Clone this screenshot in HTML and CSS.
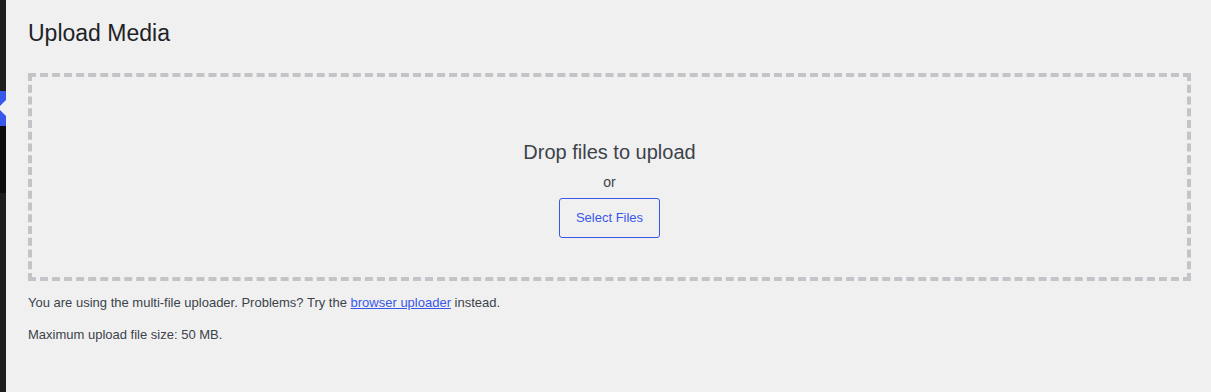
FILE: index.html
```html
<!DOCTYPE html>
<html lang="en">
<head>
<meta charset="utf-8">
<title>Upload Media</title>
<link rel="stylesheet" href="styles.css">
</head>
<body>
<div class="layout">
  <nav class="sidebar">
    <div class="menu-top"></div>
    <div class="menu-current"></div>
    <div class="submenu"></div>
    <div class="menu-rest"></div>
  </nav>
  <main class="content">
    <h1 class="page-title">Upload Media</h1>
    <div class="drop-area">
      <div class="drop-inside">
        <p class="drop-info">Drop files to upload</p>
        <p class="drop-or">or</p>
        <button class="select-btn" type="button">Select Files</button>
      </div>
    </div>
    <p class="note note-first">You are using the multi-file uploader. Problems? Try the <a href="#" class="link">browser uploader</a> instead.</p>
    <p class="note">Maximum upload file size: 50 MB.</p>
  </main>
</div>
</body>
</html>
```

FILE: styles.css
```css
* { box-sizing: border-box; }

html, body {
  margin: 0;
  padding: 0;
  height: 100%;
  background: #f0f0f1;
  font-family: "Liberation Sans", Arial, sans-serif;
  color: #3c434a;
}

.layout {
  display: flex;
  min-height: 100%;
  height: 392px;
  overflow: hidden;
}

.sidebar {
  width: 6px;
  flex: 0 0 6px;
  display: flex;
  flex-direction: column;
  overflow: hidden;
}

.menu-top { height: 91px; background: #1e1e1e; }

.menu-current {
  height: 35px;
  background: #3858e9;
  position: relative;
}

.menu-current::after {
  content: "";
  position: absolute;
  right: 0;
  top: 9px;
  width: 0;
  height: 0;
  border-top: 8px solid transparent;
  border-bottom: 8px solid transparent;
  border-right: 8px solid #f0f0f1;
}

.submenu { height: 67px; background: #0c0c0c; }

.menu-rest { flex: 1; background: #1e1e1e; }

.content {
  flex: 1;
  padding: 0 20px 0 22px;
}

.page-title {
  margin: 0;
  padding: 19px 0 4px;
  font-size: 23px;
  font-weight: 400;
  line-height: 1.3;
  color: #1d2327;
}

.drop-area {
  margin-top: 20px;
  border: 4px dashed #c3c4c7;
  height: 208px;
}

.drop-inside {
  display: flex;
  flex-direction: column;
  align-items: center;
  padding-top: 64px;
}

.drop-info {
  margin: 0;
  font-size: 20px;
  line-height: 23px;
  color: #3c434a;
}

.drop-or {
  margin: 5px 0 0;
  font-size: 14px;
  line-height: 27px;
  color: #3c434a;
}

.select-btn {
  margin-top: 2px;
  height: 40px;
  padding: 0 16px;
  font-family: "Liberation Sans", Arial, sans-serif;
  font-size: 13px;
  line-height: 38px;
  color: #3858e9;
  background: transparent;
  border: 1px solid #3858e9;
  border-radius: 3px;
  cursor: pointer;
}

.note {
  margin: 13px 0 0;
  font-size: 13px;
  line-height: 19.5px;
  color: #3c434a;
}

.note-first { margin-top: 12px; }

.link {
  color: #3858e9;
  text-decoration: underline;
}
```
